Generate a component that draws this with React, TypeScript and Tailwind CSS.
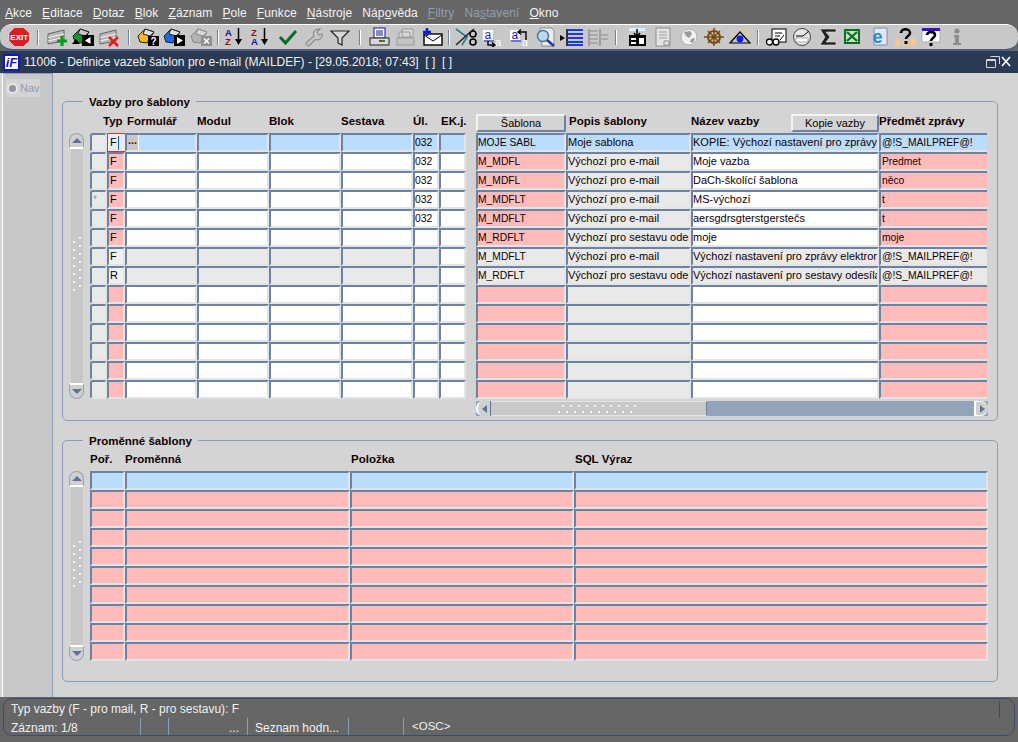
import type { ReactNode } from "react";

const MENU: [string, string, string, boolean?][] = [
  ["", "A", "kce"],
  ["", "E", "ditace"],
  ["", "D", "otaz"],
  ["", "B", "lok"],
  ["", "Z", "áznam"],
  ["", "P", "ole"],
  ["", "F", "unkce"],
  ["", "N", "ástroje"],
  ["Náp", "o", "věda"],
  ["", "F", "iltry", true],
  ["Na", "s", "tavení", true],
  ["", "O", "kno"],
];

const LEFT_COLS = "grid grid-cols-[17px_18px_72px_72px_72px_72px_26px_27px]";
const RIGHT_COLS = "grid grid-cols-[90px_125px_188px_108px]";
const VAR_COLS = "grid grid-cols-[35px_225px_224px_414px]";

const BLUE = "bg-[#badcfd]";
const PINK = "bg-[#ffbaba]";
const GREY = "bg-[#e9e9e9]";
const WHITE = "bg-white";

const RIGHT_ROWS = [
  ["MOJE SABL", "Moje sablona", "KOPIE: Výchozí nastavení pro zprávy", "@!S_MAILPREF@!"],
  ["M_MDFL", "Výchozí pro e-mail", "Moje vazba", "Predmet"],
  ["M_MDFL", "Výchozí pro e-mail", "DaCh-školící šablona", "něco"],
  ["M_MDFLT", "Výchozí pro e-mail", "MS-výchozí", "t"],
  ["M_MDFLT", "Výchozí pro e-mail", "aersgdrsgterstgerstečs", "t"],
  ["M_RDFLT", "Výchozí pro sestavu odeslání", "moje", "moje"],
  ["M_MDFLT", "Výchozí pro e-mail", "Výchozí nastavení pro zprávy elektronické", "@!S_MAILPREF@!"],
  ["M_RDFLT", "Výchozí pro sestavu odeslání", "Výchozí nastavení pro sestavy odesílané", "@!S_MAILPREF@!"],
  ["", "", "", ""],
  ["", "", "", ""],
  ["", "", "", ""],
  ["", "", "", ""],
  ["", "", "", ""],
  ["", "", "", ""],
];

function Cell({ bg, children, className = "" }: { bg: string; children?: ReactNode; className?: string }) {
  return (
    <div
      className={`h-[19px] overflow-hidden whitespace-nowrap border-2 border-t-[#6d81a2] border-l-[#6d81a2] border-r-[#e4e4e4] border-b-[#e4e4e4] leading-[15px] text-[#100000] ${bg} ${className}`}
    >
      {children}
    </div>
  );
}

function Grip({ vertical, count = 10 }: { vertical?: boolean; count?: number }) {
  const dots = [];
  for (let i = 0; i < count; i++) {
    const a = i * 8;
    dots.push(
      vertical ? (
        <g key={i}>
          <rect x="8" y={a} width="2" height="2" fill="#f4f4f4" />
          <rect x="2" y={a + 4} width="2" height="2" fill="#f4f4f4" />
        </g>
      ) : (
        <g key={i}>
          <rect x={a + 4} y="1" width="2" height="2" fill="#f4f4f4" />
          <rect x={a} y="7" width="2" height="2" fill="#f4f4f4" />
        </g>
      ),
    );
  }
  return vertical ? (
    <svg width="12" height={count * 8 + 2} viewBox={`0 0 12 ${count * 8 + 2}`}>
      {dots}
    </svg>
  ) : (
    <svg width={count * 8 + 2} height="10" viewBox={`0 0 ${count * 8 + 2} 10`}>
      {dots}
    </svg>
  );
}

function ScrollV({ height, count }: { height: string; count: number }) {
  return (
    <div className={`flex w-[15px] flex-col items-center ${height}`}>
      <div className="flex h-[16px] w-[15px] items-center justify-center rounded-t-[8px] border border-b-2 border-[#93a3ba] border-b-white bg-[#d0d0d0]">
        <div className="h-0 w-0 border-x-[5px] border-b-[5px] border-x-transparent border-b-[#5f7394]" />
      </div>
      <div className="flex w-[12px] flex-1 items-center justify-center bg-[#c8c8c8]">
        <Grip vertical count={count} />
      </div>
      <div className="flex h-[16px] w-[15px] items-center justify-center rounded-b-[8px] border border-t-2 border-[#93a3ba] border-t-white bg-[#d0d0d0]">
        <div className="h-0 w-0 border-x-[5px] border-t-[5px] border-x-transparent border-t-[#5f7394]" />
      </div>
    </div>
  );
}

function ScrollH() {
  return (
    <div className="mt-[2px] flex h-[15px] w-[512px] bg-[#94a4b8]">
      <div className="flex w-[15px] items-center justify-center rounded-l-[7px] border-r border-r-[#5f7394] border-l-2 border-l-white bg-[#d0d0d0]">
        <div className="h-0 w-0 border-y-[4px] border-r-[5px] border-y-transparent border-r-[#5f7394]" />
      </div>
      <div className="flex w-[216px] items-center justify-center border-y border-r border-y-[#e4e4e4] border-r-[#6d81a2] bg-[#c8c8c8]">
        <Grip />
      </div>
      <div className="flex-1" />
      <div className="flex w-[14px] items-center justify-center rounded-r-[7px] border-y border-l-2 border-white bg-[#d0d0d0]">
        <div className="h-0 w-0 border-y-[4px] border-l-[5px] border-y-transparent border-l-[#5f7394]" />
      </div>
    </div>
  );
}

function Group({ title, height, children }: { title: string; height: string; children: ReactNode }) {
  return (
    <div className={`relative w-[936px] rounded-[5px] border border-[#8c9db6] ${height}`}>
      <div className="absolute -top-[7px] left-[20px] bg-[#d4d4d4] px-[6px] text-[11.5px] font-bold leading-[14px] text-[#100000]">{title}</div>
      {children}
    </div>
  );
}

function Th({ children, className = "" }: { children?: ReactNode; className?: string }) {
  return <div className={`whitespace-nowrap text-[11.5px] font-bold leading-[14px] text-[#100000] ${className}`}>{children}</div>;
}

function FormButton({ children, className = "" }: { children: string; className?: string }) {
  return (
    <div
      className={`mt-[1px] flex h-[18px] items-center justify-center rounded-[2px] border-2 border-t-[#f4f4f4] border-l-[#f4f4f4] border-r-[#6d81a2] border-b-[#6d81a2] bg-[#d4d4d4] pt-px text-[11px] text-[#100000] ${className}`}
    >
      {children}
    </div>
  );
}

function LeftTable() {
  return (
    <div className="w-[376px]">
      <div className={`${LEFT_COLS} h-[20px]`}>
        <div />
        <Th className="-ml-[4px] pt-px">Typ</Th>
        <Th className="pl-[2px] pt-px">Formulář</Th>
        <Th className="pt-px">Modul</Th>
        <Th className="pt-px">Blok</Th>
        <Th className="pt-px">Sestava</Th>
        <Th className="pt-px">Úl.</Th>
        <Th className="pl-[2px] pt-px">EK.j.</Th>
      </div>
      <div className={LEFT_COLS}>
        {RIGHT_ROWS.map((_, i) => {
          const first = i === 0;
          const locked = i === 6 || i === 7;
          const base = first ? BLUE : locked ? GREY : WHITE;
          const typ = i === 7 ? "R" : i < 8 ? "F" : "";
          return [
            <Cell key={`c${i}`} bg={GREY} className="rounded-[3px] pl-px text-[10px]">
              {i === 3 ? <span className="text-[#8c9db6]">*</span> : ""}
            </Cell>,
            first ? (
              <div key={`t${i}`} className="flex h-[19px] items-center border border-r-0 border-[#ee2a2a] bg-[#e9eef5] pl-[2px] text-[11px] text-[#100000]">
                F<span className="ml-px h-[14px] w-px bg-[#1b5fc0]" />
              </div>
            ) : (
              <Cell key={`t${i}`} bg={locked ? "bg-[#efefef]" : PINK} className="pl-px text-[11px]">
                {typ}
              </Cell>
            ),
            first ? (
              <Cell key={`f${i}`} bg={BLUE}>
                <div className="flex h-[15px] w-[12px] items-center justify-center border-r border-r-white bg-[#c8c8c8] pb-[5px] text-[11px] font-bold leading-none text-[#600000]">
                  ...
                </div>
              </Cell>
            ) : (
              <Cell key={`f${i}`} bg={base} />
            ),
            <Cell key={`m${i}`} bg={base} />,
            <Cell key={`b${i}`} bg={base} />,
            <Cell key={`s${i}`} bg={base} />,
            <Cell key={`u${i}`} bg={base} className="text-[10.4px]">
              {i < 5 ? "032" : ""}
            </Cell>,
            <Cell key={`e${i}`} bg={first ? BLUE : WHITE} />,
          ];
        })}
      </div>
    </div>
  );
}

function RightTable() {
  return (
    <div className="ml-[10px] w-[512px]">
      <div className={`${RIGHT_COLS} h-[20px]`}>
        <FormButton>Šablona</FormButton>
        <Th className="pl-[3px] pt-px">Popis šablony</Th>
        <div className="flex justify-between">
          <Th className="pt-px">Název vazby</Th>
          <FormButton className="w-[88px]">Kopie vazby</FormButton>
        </div>
        <Th className="pt-px">Předmět zprávy</Th>
      </div>
      <div className={RIGHT_COLS}>
        {RIGHT_ROWS.map((r, i) => {
          const first = i === 0;
          const locked = i === 6 || i === 7;
          const tone = first ? BLUE : locked ? GREY : PINK;
          return [
            <Cell key={`a${i}`} bg={tone} className="text-[10.3px]">
              {r[0]}
            </Cell>,
            <Cell key={`p${i}`} bg={first ? BLUE : GREY} className="text-[11px]">
              {r[1]}
            </Cell>,
            <Cell key={`n${i}`} bg={first ? BLUE : locked ? GREY : WHITE} className="text-[11px]">
              {r[2]}
            </Cell>,
            <Cell key={`q${i}`} bg={tone} className="border-r-0 pl-px text-[10.3px]">
              {r[3]}
            </Cell>,
          ];
        })}
      </div>
      <ScrollH />
    </div>
  );
}

function VarTable() {
  return (
    <div>
      <div className={`${VAR_COLS} h-[19px]`}>
        <Th>Poř.</Th>
        <Th>Proměnná</Th>
        <Th className="pl-px">Položka</Th>
        <Th className="pl-px">SQL Výraz</Th>
      </div>
      <div className={VAR_COLS}>
        {Array.from({ length: 10 }).map((_, i) => {
          const bg = i === 0 ? BLUE : PINK;
          return [0, 1, 2, 3].map((c) => <Cell key={`${i}-${c}`} bg={bg} />);
        })}
      </div>
    </div>
  );
}

function Sep({ className = "" }: { className?: string }) {
  return (
    <div className={`flex shrink-0 justify-center ${className}`}>
      <div className="h-[15px] w-[2px] border-l border-l-[#6d81a2] bg-white" />
    </div>
  );
}

function Ico({ children, narrow }: { children: ReactNode; narrow?: boolean }) {
  return (
    <div className={`flex shrink-0 items-center justify-center ${narrow ? "w-[25.8px]" : "w-[26.4px]"}`}>
      <svg width="24" height="20" viewBox="0 0 24 20">
        {children}
      </svg>
    </div>
  );
}

function Rows() {
  return (
    <g stroke="#666" strokeWidth="1">
      <path d="M3 7 L19 3 V14 L3 17 Z" fill="#b8b8b8" />
      <path d="M3 10.5 L19 7 M3 14 L19 10.5" stroke="#f4f4f4" />
    </g>
  );
}

function Pages({ a, b, stroke = "#222" }: { a: string; b: string; stroke?: string }) {
  return (
    <g stroke={stroke} strokeWidth="1">
      <path d="M2 9 L9 2 L18 5 L11 16 L4 15 Z" fill={a} />
      <path d="M9 2 L18 5 L14 9 L7 7 Z" fill={b} />
    </g>
  );
}

function SortIcon({ top, bottom, tc, bc }: { top: string; bottom: string; tc: string; bc: string }) {
  return (
    <g fontFamily="Liberation Sans, sans-serif" fontWeight="700" fontSize="9.5">
      <text x="2" y="9" fill={tc}>
        {top}
      </text>
      <text x="2" y="18" fill={bc}>
        {bottom}
      </text>
      <path d="M15.5 1 V13" stroke="#000" strokeWidth="1.5" />
      <path d="M12 12 H19 L15.5 18 Z" fill="#000" />
    </g>
  );
}

function LetterAct({ back }: { back?: boolean }) {
  return (
    <g fontFamily="Liberation Sans, sans-serif">
      <rect x="3" y="3" width="10" height="10" fill="#fff" />
      <text x="4.5" y="12" fontSize="12" fill="#1a1ad8">
        a
      </text>
      <path d="M4 14 H14" stroke="#1a1ad8" />
      <text x="15" y="19" fontSize="11" fill="#fff">
        a
      </text>
      {back ? (
        <path d="M19 13 V5 H12 M14 2.5 L11 5 L14 7.5" fill="none" stroke="#000" strokeWidth="1.4" />
      ) : (
        <path d="M8 14 V18 H14 M12 15.5 L15 18 L12 20" fill="none" stroke="#000" strokeWidth="1.4" />
      )}
    </g>
  );
}

function Toolbar() {
  return (
    <div className="flex h-[27px] shrink-0 items-center rounded-[12px] border-t border-b-2 border-t-white border-b-[#4d5f7c] bg-[#c8c8c8] pl-[7px]">
      <Ico>
        <path d="M6.5 0.5 H15.5 L21.5 6 V14 L15.5 19.5 H6.5 L1 14 V6 Z" fill="#d81f26" stroke="#fff" strokeWidth="0.5" />
        <text x="11.2" y="12.8" textAnchor="middle" fontSize="8" fontWeight="700" fill="#fff" fontFamily="Liberation Sans, sans-serif">
          EXIT
        </text>
      </Ico>
      <Sep className="w-[10px]" />
      <Ico>
        <Rows />
        <path d="M17 9 V19 M12 14 H22" stroke="#0a9a1a" strokeWidth="3.2" />
      </Ico>
      <Ico>
        <Pages a="#0a9a2a" b="#c8c8c8" />
        <rect x="11" y="8" width="12" height="11" fill="#000" />
        <path d="M19.5 10 V17 L14 13.5 Z" fill="#fff" />
        <path d="M1 17 L5 12 L9 17 Z" fill="#000" />
      </Ico>
      <Ico>
        <Rows />
        <path d="M12 10 L21 19 M21 10 L12 19" stroke="#e0201c" strokeWidth="2.6" />
      </Ico>
      <Sep className="w-[12px]" />
      <Ico>
        <Pages a="#f8b818" b="#e0e0e0" />
        <rect x="12" y="9" width="11" height="10" fill="#000" />
        <text x="17.5" y="17.8" textAnchor="middle" fontSize="10" fontWeight="700" fill="#fff" fontFamily="Liberation Sans, sans-serif">
          ?
        </text>
      </Ico>
      <Ico>
        <Pages a="#1c6ce0" b="#e0e0e0" />
        <rect x="12" y="8" width="11" height="11" fill="#000" />
        <path d="M15 10 V17 L21 13.5 Z" fill="#fff" />
      </Ico>
      <Ico>
        <Pages a="#b4b4b4" b="#d8d8d8" stroke="#8a8a8a" />
        <rect x="12" y="9" width="11" height="10" fill="#909090" />
        <path d="M15 11.5 L20 16.5 M20 11.5 L15 16.5" stroke="#fff" strokeWidth="1.4" />
      </Ico>
      <Sep className="w-[8px]" />
      <Ico>
        <SortIcon top="A" bottom="Z" tc="#14148c" bc="#8c1420" />
      </Ico>
      <Ico>
        <SortIcon top="Z" bottom="A" tc="#8c1420" bc="#14148c" />
      </Ico>
      <Ico>
        <path d="M4 10 L9.5 16 L20 4" fill="none" stroke="#0a6e22" strokeWidth="3" />
      </Ico>
      <Ico>
        <path
          d="M5 18 L4 16 L12 9 C10 5 13 2 18 2 L15 5 L17 8 L20 7 C21 11 17 14 13 12.5 L7 19 Z"
          fill="none"
          stroke="#8e8e8e"
          strokeWidth="1.2"
        />
      </Ico>
      <Ico>
        <path d="M3 4 H21 L14 11 V18 L10 16 V11 Z" fill="#d8d8d8" stroke="#222" strokeWidth="1.2" />
      </Ico>
      <Sep className="w-[12px]" />
      <Ico>
        <rect x="7" y="1" width="11" height="10" fill="#fff" stroke="#14148c" />
        <path d="M9 4 H16 M9 6 H16 M9 8 H16" stroke="#14148c" />
        <rect x="3" y="11" width="19" height="7" fill="#d8d8d8" stroke="#222" />
        <rect x="12" y="13" width="3" height="2" fill="#e0201c" />
        <rect x="15" y="13" width="3" height="2" fill="#0a9a2a" />
      </Ico>
      <Ico>
        <path d="M9 2 H20 V10 H9 Z M6 5 H17 V11 H6 Z" fill="#d8d8d8" stroke="#9a9a9a" />
        <rect x="4" y="11" width="17" height="7" fill="#c4c4c4" stroke="#9a9a9a" />
      </Ico>
      <Ico>
        <rect x="4" y="7" width="18" height="11" fill="#fff" stroke="#000" strokeWidth="1.4" />
        <path d="M4 8 L13 14 L22 8" fill="none" stroke="#000" />
        <path d="M7 1 V9 M3 5 H11" stroke="#0a20d8" strokeWidth="2.6" />
      </Ico>
      <Sep className="w-[8px]" />
      <Ico>
        <path d="M2 2 L13 10 L8 18" fill="none" stroke="#2c7a8a" strokeWidth="1.6" />
        <path d="M2 18 L13 8 L20 2" fill="none" stroke="#222" strokeWidth="1.6" />
        <circle cx="19" cy="7" r="3" fill="#c8c8c8" stroke="#000" strokeWidth="1.6" />
        <circle cx="19" cy="15" r="3" fill="#c8c8c8" stroke="#000" strokeWidth="1.6" />
      </Ico>
      <Ico>
        <LetterAct />
      </Ico>
      <Ico>
        <LetterAct back />
      </Ico>
      <Ico>
        <path d="M7 1 H19 L21 4 V19 H9 Z" fill="#ececec" stroke="#8e8e8e" />
        <circle cx="10" cy="9" r="5.5" fill="#b8dcec" stroke="#50708e" strokeWidth="1.4" />
        <path d="M14 13 L21 19" stroke="#1c3ea8" strokeWidth="2.6" />
      </Ico>
      <Ico>
        <path d="M7 2 V19" stroke="#000" strokeWidth="1.5" />
        <path d="M0 8 L5 11 L0 14 Z" fill="#000" />
        <path d="M8 3 H23 M8 7 H23 M8 11 H23 M8 15 H23 M8 18 H23" stroke="#1c3cd8" strokeWidth="2" />
      </Ico>
      <Ico>
        <path d="M3 2 V19 M14 2 V19" stroke="#8e8e8e" strokeWidth="1.4" />
        <path d="M4 4 H12 M4 8 H12 M4 12 H12 M4 16 H12 M15 8 H22 M15 12 H22" stroke="#9e9e9e" strokeWidth="1.6" />
      </Ico>
      <Sep className="w-[13px] pr-[3px]" />
      <Ico narrow>
        <rect x="4" y="1" width="16" height="3" fill="#d8f0ff" />
        <rect x="4" y="8" width="17" height="11" fill="#000" />
        <path d="M12 2 V9 M9 6 L12 10 L15 6" fill="none" stroke="#000" strokeWidth="1.5" />
        <path d="M6 11 H11 V13 H6 Z M6 15 H11 V17 H6 Z M14 11 H19 V17 H14 Z" fill="#fff" />
      </Ico>
      <Ico narrow>
        <rect x="5" y="1" width="14" height="18" fill="#e4e4e4" stroke="#8e8e8e" />
        <path d="M8 5 H16 M8 8 H16 M8 11 H16" stroke="#9e9e9e" />
        <path d="M13 14 H18 V18 H13 Z" fill="none" stroke="#8e8e8e" />
      </Ico>
      <Ico narrow>
        <circle cx="12" cy="10" r="8" fill="#f0f0f0" stroke="#b0b0b0" />
        <path d="M7 5 L13 4 L15 7 L12 11 L9 9 Z M14 12 L18 11 L16 16 L13 15 Z" fill="#9a9a9a" />
      </Ico>
      <Ico narrow>
        <circle cx="12" cy="10" r="6" fill="none" stroke="#7a4a10" strokeWidth="2" />
        <path d="M2 10 H22 M12 1 V19 M6 4 L18 16 M18 4 L6 16" stroke="#7a4a10" strokeWidth="1.5" />
      </Ico>
      <Ico narrow>
        <path d="M2 16 L12 5 L22 16 Z" fill="#c4c4c4" stroke="#000" strokeWidth="1.2" />
        <circle cx="12" cy="12" r="3.4" fill="#0a20e8" />
        <path d="M3 6 L6 8 M21 6 L18 8 M12 1 V3 M7 2 L8 5 M17 2 L16 5" stroke="#f8e030" />
      </Ico>
      <Sep className="w-[10px] pr-px" />
      <Ico narrow>
        <rect x="8" y="2" width="14" height="13" fill="#fff" stroke="#000" />
        <path d="M11 6 H18 M11 9 H16 M16 13 L20 8" stroke="#000" />
        <circle cx="5.5" cy="15" r="3" fill="#fff" stroke="#000" strokeWidth="1.3" />
        <circle cx="12" cy="15" r="3" fill="#fff" stroke="#000" strokeWidth="1.3" />
      </Ico>
      <Ico narrow>
        <circle cx="12" cy="10" r="8.5" fill="#e8e8e8" stroke="#444" />
        <path d="M6 9 H13 L19 4" fill="none" stroke="#000" />
        <rect x="6" y="11" width="12" height="4" fill="#fff" stroke="#666" strokeWidth="0.5" />
      </Ico>
      <Ico narrow>
        <path d="M4 2 H20 V5 H10 L14 10 L10 15 H20 V18 H4 L9 10 Z" fill="#222" stroke="#e8e8e8" strokeWidth="0.6" />
      </Ico>
      <Ico narrow>
        <rect x="3" y="2" width="16" height="15" fill="#0a6e22" />
        <rect x="5" y="4" width="12" height="11" fill="#c8e0c8" />
        <path d="M6 5 L16 14 M16 5 L6 14" stroke="#0a6e22" strokeWidth="2.2" />
      </Ico>
      <Ico narrow>
        <path d="M7 1 H20 V18 H7 Z" fill="#e0e8f4" stroke="#7a8cb0" />
        <text x="10.5" y="16" textAnchor="middle" fontSize="18" fontWeight="700" fill="#2a88d8" fontFamily="Liberation Sans, sans-serif">
          e
        </text>
      </Ico>
      <Ico narrow>
        <rect x="2" y="11" width="5" height="8" fill="#f8c888" />
        <rect x="18" y="11" width="5" height="8" fill="#f8c888" />
        <rect x="10" y="13" width="6" height="6" fill="#f8c888" />
        <path d="M8 6 C8 1 17 1 17 6 C17 9 13 9 13 12" fill="none" stroke="#000" strokeWidth="2.6" />
        <rect x="11.5" y="14" width="3" height="3" fill="#000" />
      </Ico>
      <Ico narrow>
        <rect x="3" y="2" width="18" height="13" fill="#fff" stroke="#aaa" />
        <rect x="3" y="1" width="18" height="3" fill="#3a10c8" />
        <path d="M8 8 C8 4 16 4 16 8 C16 11 12 11 12 14" fill="none" stroke="#000" strokeWidth="2.6" />
        <rect x="10.5" y="16" width="3" height="3" fill="#000" />
      </Ico>
      <Ico narrow>
        <circle cx="12" cy="4" r="2.6" fill="#8e8e8e" />
        <path d="M9 8 H14 V16 H16 V18 H8 V16 H10 V10 H9 Z" fill="#8e8e8e" />
      </Ico>
    </div>
  );
}

function StatusCell({ className = "", children }: { className?: string; children?: ReactNode }) {
  return <div className={`h-[17px] shrink-0 border-r border-r-[#8c9db6] ${className}`}>{children}</div>;
}

export default function App() {
  return (
    <div className="flex h-[742px] w-[1018px] flex-col overflow-hidden bg-[#666666] font-['Liberation_Sans',Arial,sans-serif]">
      <div className="flex h-[24px] shrink-0 items-center gap-[10px] pl-[5px] pt-px text-[12px] tracking-[0.1px] text-[#f4f4f4]">
        {MENU.map(([pre, key, rest, dim]) => (
          <span key={pre + key + rest} className={dim ? "text-[#90a0ae]" : ""}>
            {pre}
            <span className="underline">{key}</span>
            {rest}
          </span>
        ))}
      </div>
      <Toolbar />
      <div className="flex h-[22px] shrink-0 items-center bg-[#2a3a52] pl-[3px] pr-[7px] text-[12px] text-[#f0f0f0]">
        <div className="flex h-[17px] w-[17px] items-center justify-center border-2 border-[#1414c8] bg-white text-[13px] font-bold italic leading-none text-[#1414c8]">
          iF
        </div>
        <span className="ml-[4px] flex-1 whitespace-pre">11006 - Definice vazeb šablon pro e-mail (MAILDEF) - [29.05.2018; 07:43]  [ ]  [ ]</span>
        <svg width="26" height="14" viewBox="0 0 26 14">
          <path d="M5.5 1.5 H14.5 V9 M1.5 5 H10.5 V12.5 H1.5 Z" fill="none" stroke="#d8d8d8" />
          <path d="M1.5 5 H10.5" stroke="#d8d8d8" strokeWidth="2" />
          <path d="M17 2 L25 11 M25 2 L17 11" stroke="#fff" strokeWidth="1.6" />
        </svg>
      </div>
      <div className="flex h-[624px] shrink-0 bg-[#d4d4d4] pl-[2px]">
        <div className="w-[51px] shrink-0 rounded-tl-[3px] border-x border-t border-l-white border-r-[#8c9db6] border-t-[#8c9db6] bg-[#c8c8c8] pl-[3px] pt-[5px]">
          <div className="flex h-[18px] w-[34px] items-center gap-[2px] bg-[#d4d4d4] pl-px text-[11px] text-[#8c9db6]">
            <span className="h-[11px] w-[11px] rounded-full border-2 border-[#e8e8e8] bg-[#8e94a0]" />
            Nav
          </div>
        </div>
        <div className="flex flex-1 flex-col gap-[19px] pl-[9px] pt-[28px]">
          <Group title="Vazby pro šablony" height="h-[320px]">
            <div className="flex pl-[6px] pt-[11px]">
              <div className="pt-[20px]">
                <ScrollV height="h-[266px]" count={7} />
              </div>
              <div className="ml-[6px] flex">
                <LeftTable />
                <RightTable />
              </div>
            </div>
          </Group>
          <Group title="Proměnné šablony" height="h-[242px]">
            <div className="flex pl-[6px] pt-[11px]">
              <div className="pt-[19px]">
                <ScrollV height="h-[190px]" count={6} />
              </div>
              <div className="ml-[6px]">
                <VarTable />
              </div>
            </div>
          </Group>
        </div>
      </div>
      <div className="mx-[3px] mt-px flex h-[38px] flex-col rounded-[9px] border border-[#3e4c62] pl-[7px] pt-px text-[12px] text-[#f0f0f0]">
        <div className="flex h-[18px] items-center">
          <span className="flex-1">Typ vazby (F - pro mail, R - pro sestavu): F</span>
          <div className="mr-[14px] h-[17px] border-r border-r-[#3e4c62]" />
        </div>
        <div className="flex h-[18px] items-center">
          <StatusCell className="w-[130px] pt-px">Záznam: 1/8</StatusCell>
          <StatusCell className="w-[28px]" />
          <StatusCell className="w-[79px] pr-[8px] pt-px text-right">...</StatusCell>
          <StatusCell className="w-[101px] pl-[7px] pt-px">Seznam hodn...</StatusCell>
          <StatusCell className="w-[55px]" />
          <span className="pl-[8px] text-[11.5px]">&lt;OSC&gt;</span>
        </div>
      </div>
    </div>
  );
}
